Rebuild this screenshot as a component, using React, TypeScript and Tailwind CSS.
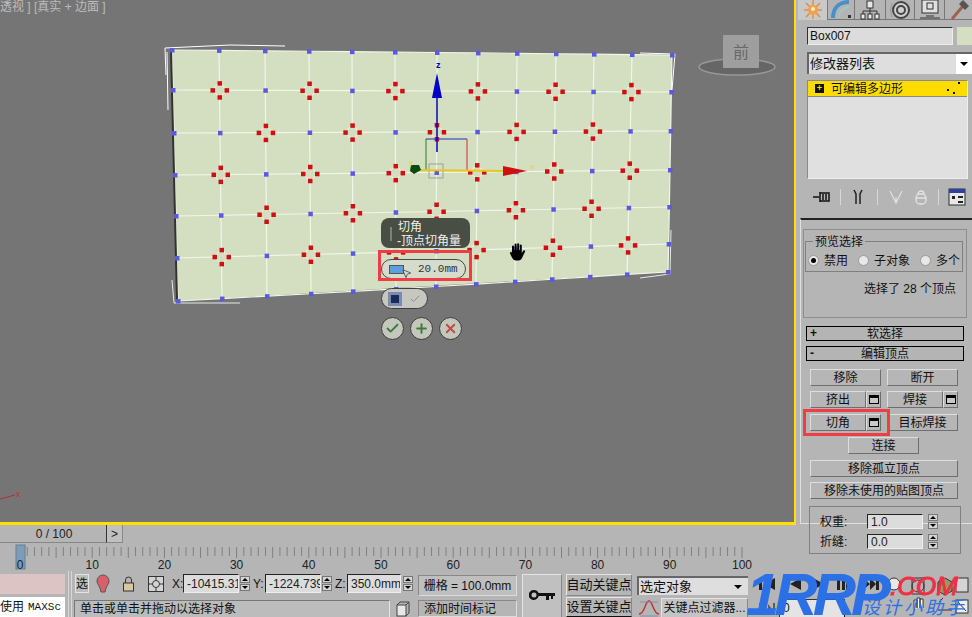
import React from "react";
import { Check, Plus, X, MousePointer2 } from "lucide-react";

const FONT = '"Liberation Sans","Noto Sans CJK SC",sans-serif';

const topX = [172, 219, 265, 309, 352, 395, 437, 478, 517, 556, 594, 632, 672];
const botX = [178, 222, 267, 311, 353, 396, 436, 476, 515, 552, 590, 627, 668];
const leftY = [50, 90, 133, 175, 216, 258, 301];
const rightY = [55, 92, 131, 170, 207, 244, 272];

function pt(i: number, j: number): [number, number] {
  const t = j / 6;
  const u = i / 12;
  return [topX[i] + (botX[i] - topX[i]) * t, leftY[j] + (rightY[j] - leftY[j]) * u];
}

function Mesh() {
  const idx = Array.from({ length: 13 }, (_, i) => i);
  const rows = Array.from({ length: 7 }, (_, j) => j);
  const outline = [pt(0, 0), pt(12, 0), pt(12, 6), pt(0, 6)].map((p) => p.join(",")).join(" ");
  return (
    <svg width="794" height="522" className="block">
      <polygon points={outline} fill="#d3dfc0" />
      {rows.map((j) => (
        <polyline key={j} fill="none" stroke="#f2f5ea" strokeWidth="1.2" points={idx.map((i) => pt(i, j).join(",")).join(" ")} />
      ))}
      {idx.map((i) => (
        <polyline key={i} fill="none" stroke="#f2f5ea" strokeWidth="1.2" points={rows.map((j) => pt(i, j).join(",")).join(" ")} />
      ))}
      <line x1="171" y1="50" x2="177" y2="300" stroke="#30342c" strokeWidth="2" />
      <polyline points="166,75 165,48 230,45 285,46" fill="none" stroke="#fff" strokeWidth="1" />
      <polyline points="168,110 167,52" fill="none" stroke="#fff" strokeWidth="1" />
      <polyline points="172,280 174,303 240,303" fill="none" stroke="#e8e8e8" strokeWidth="1" />
      <polyline points="640,53 675,54 672,90" fill="none" stroke="#fff" strokeWidth="1" />
      <polyline points="671,230 670,274 640,278" fill="none" stroke="#e8e8e8" strokeWidth="1" />
      {rows.map((j) =>
        idx.map((i) => {
          const [x, y] = pt(i, j);
          const red = j > 0 && j < 6 && i > 0 && i < 12 && (i + j) % 2 === 0;
          if (!red) return <rect key={i + "-" + j} x={x - 2} y={y - 2} width="4.5" height="4.5" fill="#5a5ae0" />;
          return (
            <g key={i + "-" + j}>
              <circle cx={x} cy={y} r="5.5" fill="#d3dfc0" stroke="#f2f5ea" strokeWidth="1" />
              <rect x={x - 2} y={y - 9} width="4.5" height="4.5" fill="#d01010" />
              <rect x={x - 2} y={y + 5} width="4.5" height="4.5" fill="#d01010" />
              <rect x={x - 9} y={y - 2} width="4.5" height="4.5" fill="#d01010" />
              <rect x={x + 5} y={y - 2} width="4.5" height="4.5" fill="#d01010" />
            </g>
          );
        })
      )}
      {/* gizmo */}
      <rect x="429" y="164" width="14" height="14" fill="none" stroke="#a0a0a0" strokeWidth="1" />
      <line x1="426" y1="170" x2="426" y2="139" stroke="#1a8a1a" />
      <line x1="426" y1="139" x2="467" y2="139" stroke="#2030c0" />
      <line x1="467" y1="139" x2="467" y2="171" stroke="#d03030" />
      <line x1="437" y1="152" x2="437" y2="95" stroke="#0000c8" strokeWidth="1.5" />
      <polygon points="437,73 432,98 442,98" fill="#0000c8" />
      <text x="436" y="68" fontSize="9" fontWeight="700" fill="#0000c8" fontFamily={FONT}>z</text>
      <line x1="414" y1="170" x2="505" y2="171" stroke="#e8c820" strokeWidth="2" />
      <polygon points="503,166 503,176 527,171" fill="#d01010" />
      <polygon points="411,165 419,165 421,170 414,174 410,171" fill="#0b4a10" />
      <text x="409" y="165" fontSize="8" fill="#e8d040" fontFamily={FONT}>y</text>
      <text x="530" y="169" fontSize="8" fill="#e8d040" fontFamily={FONT}>x</text>
      {/* view cube */}
      <ellipse cx="737" cy="67" rx="38" ry="8" fill="#666" stroke="#989898" strokeWidth="1.5" />
      <rect x="723" y="35" width="36" height="33" rx="1" fill="#9e9e9e" />
      <text x="741" y="58" textAnchor="middle" fontSize="16" fill="#686868" fontFamily={FONT}>前</text>
      {/* origin axes */}
      <line x1="0" y1="499" x2="15" y2="495" stroke="#b03030" />
      <text x="16" y="497" fontSize="9" fill="#c03030" fontFamily={FONT}>x</text>
    </svg>
  );
}

function PillBtn({ children }: { children: React.ReactNode }) {
  return (
    <div className="w-[23px] h-[23px] rounded-full border border-[#3c3c3c] bg-[#c4c8bc] flex items-center justify-center">
      {children}
    </div>
  );
}

function Caddy() {
  return (
    <>
      <div className="absolute left-[381px] top-[218px] w-[89px] h-[30px] rounded-[8px] bg-[#484e44] text-[#f0f0f0] text-[12px] leading-[14px] pl-[17px] pt-[2px]">
        <span className="absolute left-[9px] top-[9px] w-[2px] h-[14px] bg-[#7c8278]" />
        <div>切角</div>
        <div className="-ml-[1px] whitespace-nowrap">-顶点切角量</div>
      </div>
      <div className="absolute left-[381px] top-[259px] w-[85px] h-[20px] rounded-full border border-[#4a4a4a] bg-[#d6dccc] flex items-center text-[11px] text-[#333] pl-[7px]" style={{ fontFamily: '"Liberation Mono",monospace' }}>
        <span className="w-[15px] h-[9px] bg-[#5aa0e0] border border-[#555]" />
        <MousePointer2 size={11} className="-ml-[3px] mt-[8px] text-[#555]" />
        <span className="ml-[6px]">20.0mm</span>
      </div>
      <div className="absolute left-[378px] top-[250px] w-[94px] h-[31px] border-[3px] border-[#f03c44]" />
      <div className="absolute left-[381px] top-[288px] w-[47px] h-[21px] rounded-full border border-[#404040] bg-[#c6c8c0] flex items-center pl-[6px] gap-[7px]">
        <span className="w-[14px] h-[14px] bg-[#1c2a5a] border-[3px] border-[#7a8ab0]" />
        <Check size={12} className="text-[#909090]" />
      </div>
      <div className="absolute left-[381px] top-[317px] flex gap-[6px]">
        <PillBtn><Check size={15} strokeWidth={3} className="text-[#3d7a3d]" /></PillBtn>
        <PillBtn><Plus size={15} strokeWidth={3} className="text-[#3d7a3d]" /></PillBtn>
        <PillBtn><X size={15} strokeWidth={3} className="text-[#c04a4a]" /></PillBtn>
      </div>
      <svg className="absolute left-[509px] top-[243px]" width="17" height="18" viewBox="0 0 17 18" fill="#000">
        <path d="M3 8V3.5a1 1 0 0 1 2 0V7h.6V1.5a1 1 0 0 1 2 0V7h.6V1.2a1 1 0 0 1 2 0V7h.6V2.5a1 1 0 0 1 2 0V10l1.6-2.4a1 1 0 0 1 1.7 1L13 15c-.6 1.5-1.7 2.5-3.5 2.5H7C5 17.500 4 16.500 3 14.500L1 10.500a1 1 0 0 1 1.600-1.100z" />
      </svg>
    </>
  );
}

function Btn({ w, label, ml = 0 }: { w: number; label: string; ml?: number }) {
  return (
    <div
      className="h-[17px] shrink-0 bg-[#b6b6b6] border border-t-[#dedede] border-l-[#dedede] border-r-[#6e6e6e] border-b-[#6e6e6e] flex items-center justify-center text-[12px] text-[#111] whitespace-nowrap"
      style={{ width: w, marginLeft: ml }}
    >
      {label}
    </div>
  );
}

function BoxBtn() {
  return (
    <div className="w-[15px] h-[17px] shrink-0 bg-[#b6b6b6] border border-t-[#dedede] border-l-[#dedede] border-r-[#6e6e6e] border-b-[#6e6e6e] flex items-center justify-center">
      <span className="w-[10px] h-[9px] border border-black border-t-[3px] bg-[#c8c8c8]" />
    </div>
  );
}

function Tab({ w, active, children }: { w: number; active?: boolean; children: React.ReactNode }) {
  return (
    <div
      className={
        "h-[20px] shrink-0 flex items-center justify-center border-r border-[#777] " +
        (active ? "bg-[#c9c9c9]" : "bg-[#b4b4b4] border-b border-b-[#777]")
      }
      style={{ width: w }}
    >
      {children}
    </div>
  );
}

function TabIcons() {
  return (
    <div className="flex h-[20px] pl-[2px]">
      <Tab w={30} active>
        <svg width="22" height="20" viewBox="0 0 22 20">
          <g stroke="#d89040" strokeWidth="1.4">
            <line x1="11" y1="0" x2="11" y2="19" /><line x1="2" y1="10" x2="20" y2="10" />
            <line x1="4" y1="3" x2="18" y2="17" /><line x1="18" y1="3" x2="4" y2="17" />
          </g>
          <circle cx="11" cy="10" r="5" fill="#f0a050" />
          <circle cx="11" cy="9" r="2" fill="#fff0b0" />
        </svg>
      </Tab>
      <Tab w={27}>
        <svg width="24" height="20" viewBox="0 0 24 20">
          <path d="M4 18 C4 8 10 2 20 2" fill="none" stroke="#4a90c8" strokeWidth="4" />
          <path d="M10 18 C10 12 14 8 20 7" fill="none" stroke="#9cc" strokeWidth="1.5" />
          <rect x="19" y="15" width="3" height="3" fill="#333" />
        </svg>
      </Tab>
      <Tab w={31}>
        <svg width="22" height="20" viewBox="0 0 22 20" fill="#e8e8e8" stroke="#333">
          <rect x="8" y="1" width="6" height="7" />
          <path d="M11 8v3M4 14v-3h14v3M11 11v3" fill="none" />
          <rect x="2" y="14" width="4" height="5" /><rect x="9" y="14" width="4" height="5" /><rect x="16" y="14" width="4" height="5" />
        </svg>
      </Tab>
      <Tab w={29}>
        <svg width="24" height="20" viewBox="0 0 24 20" fill="none" stroke="#444">
          <circle cx="13" cy="10" r="8" strokeWidth="2" fill="#d0d0d0" />
          <circle cx="13" cy="10" r="4" strokeWidth="2" />
          <path d="M4 3 Q1 10 4 17" stroke="#999" />
        </svg>
      </Tab>
      <Tab w={30}>
        <svg width="24" height="20" viewBox="0 0 24 20" fill="none" stroke="#333">
          <rect x="4" y="0" width="16" height="13" fill="#e0e0e0" />
          <rect x="9" y="3" width="6" height="6" />
          <path d="M8 16h8M2 18h20" />
        </svg>
      </Tab>
      <Tab w={28}>
        <svg width="22" height="20" viewBox="0 0 22 20">
          <line x1="4" y1="19" x2="15" y2="6" stroke="#a06050" strokeWidth="3" />
          <polygon points="11,4 15,0 21,6 17,10" fill="#555" />
        </svg>
      </Tab>
    </div>
  );
}

function ToolRow() {
  return (
    <div className="ml-[16px] mt-[8px] h-[20px] flex items-center">
      <svg width="20" height="16" viewBox="0 0 20 16" fill="none" stroke="#111" strokeWidth="1.5">
        <path d="M1 8h6M8 3v10M8 4h9v8H8" /><path d="M11 5v6M14 5v6" />
      </svg>
      <span className="w-px h-[16px] bg-[#d8d8d8] ml-[8px]" />
      <svg className="ml-[10px]" width="14" height="16" viewBox="0 0 14 16" fill="none" stroke="#222" strokeWidth="1.5">
        <path d="M3 1l2 4v10M11 1l-2 4v10" />
      </svg>
      <span className="w-px h-[16px] bg-[#d8d8d8] ml-[12px]" />
      <svg className="ml-[10px]" width="16" height="16" viewBox="0 0 16 16" fill="none" stroke="#dedede" strokeWidth="1.3">
        <path d="M2 2l6 12 6-12M8 14V8" />
      </svg>
      <svg className="ml-[10px]" width="14" height="16" viewBox="0 0 14 16" fill="none" stroke="#e4e4e4" strokeWidth="1.3">
        <rect x="2" y="5" width="10" height="10" rx="4" /><path d="M4 5a3 3 0 0 1 6 0M2 9h10" />
      </svg>
      <span className="w-px h-[16px] bg-[#d8d8d8] ml-[10px]" />
      <svg className="ml-[9px]" width="18" height="18" viewBox="0 0 18 18">
        <rect x="1" y="1" width="16" height="16" fill="#e8e8e8" stroke="#233" />
        <rect x="1" y="1" width="16" height="4" fill="#3040a0" />
        <rect x="4" y="8" width="3" height="3" fill="#222" /><rect x="10" y="8" width="5" height="2" fill="#222" /><rect x="10" y="13" width="5" height="2" fill="#222" />
      </svg>
    </div>
  );
}

function Radio({ on, label, ml }: { on?: boolean; label: string; ml: number }) {
  return (
    <div className="flex items-center gap-[5px] shrink-0 whitespace-nowrap" style={{ marginLeft: ml }}>
      <span className="w-[11px] h-[11px] shrink-0 rounded-full bg-[#e8e8e8] border border-[#999] flex items-center justify-center">
        {on && <span className="w-[5px] h-[5px] rounded-full bg-black" />}
      </span>
      <span className="text-[12px] leading-none text-[#111]">{label}</span>
    </div>
  );
}

function Rollout({ sign, label, mt }: { sign: string; label: string; mt: number }) {
  return (
    <div className="relative ml-[3px] w-[158px] h-[15px] border border-black bg-[#b4b4b4] flex items-center justify-center text-[12px] text-[#111]" style={{ marginTop: mt }}>
      <span className="absolute left-[3px] top-[-1px] text-[12px] font-bold leading-[14px]">{sign}</span>
      {label}
    </div>
  );
}

function SpinArrows() {
  return (
    <div className="w-[10px] h-[15px] shrink-0 flex flex-col gap-px">
      <div className="flex-1 bg-[#d4d4d4] border border-[#777] flex items-center justify-center text-[0px]">
        <span className="border-x-[3px] border-x-transparent border-b-[3px] border-b-black" />
      </div>
      <div className="flex-1 bg-[#d4d4d4] border border-[#777] flex items-center justify-center text-[0px]">
        <span className="border-x-[3px] border-x-transparent border-t-[3px] border-t-black" />
      </div>
    </div>
  );
}

function Sunken({ w, text, h = 15 }: { w: number; text: string; h?: number }) {
  return (
    <div
      className="shrink-0 bg-[#dcdcdc] border border-t-[#222] border-l-[#222] border-r-[#efefef] border-b-[#efefef] text-[12px] pl-[3px] flex items-center overflow-hidden whitespace-nowrap text-[#222]"
      style={{ width: w, height: h }}
    >
      {text}
    </div>
  );
}

function RightPanel() {
  return (
    <div className="w-[176px] h-[525px] shrink-0 bg-[#b5b5b5] text-[#111]">
      <TabIcons />
      <div className="ml-[11px] mt-[7px] flex h-[18px]">
        <div className="w-[146px] bg-[#dcdcdc] border border-t-[#333] border-l-[#333] border-r-[#eee] border-b-[#eee] text-[12px] pl-[2px] flex items-center">Box007</div>
        <div className="ml-[4px] w-[15px] bg-[#d3dfc0]" />
      </div>
      <div className="ml-[11px] mt-[7px] h-[22px] w-[165px] flex bg-[#dedede] border-t-2 border-l-2 border-t-[#666] border-l-[#666]">
        <div className="flex-1 text-[13px] pl-[1px] flex items-center">修改器列表</div>
        <div className="w-[16px] bg-white flex items-center justify-center">
          <span className="border-x-[4px] border-x-transparent border-t-[4px] border-t-black" />
        </div>
      </div>
      <div className="ml-[11px] mt-[6px] h-[99px] w-[161px] bg-[#e0e0e0] border border-[#8a8a8a] border-r-[#eee] border-b-[#eee]">
        <div className="h-[16px] bg-[#ffdc00] border-b border-[#888] flex items-center relative text-[12px]">
          <span className="ml-[7px] w-[9px] h-[9px] bg-[#111] text-[#ffdc00] flex items-center justify-center text-[9px] font-bold leading-none">+</span>
          <span className="ml-[7px]">可编辑多边形</span>
          <svg className="absolute left-[138px] top-0" width="16" height="15" fill="#000">
            <rect x="12" y="1" width="2" height="2" /><rect x="1" y="8" width="2" height="2" /><rect x="7" y="11" width="2" height="2" />
          </svg>
        </div>
      </div>
      <ToolRow />
      <div className="mt-[11px] ml-[4px] h-[306px] border-t-2 border-t-[#222] border-l border-l-[#e0e0e0] border-b border-b-[#e0e0e0] pl-[2px]">
        <div className="mt-[9px] w-[164px] h-[89px] border border-[#8e8e8e] relative">
          <div className="absolute left-[1px] top-[11px] w-[158px] h-[31px] border border-[#808080]">
            <span className="absolute left-[7px] -top-[7px] bg-[#b5b5b5] px-[2px] text-[12px] leading-[14px] whitespace-nowrap">预览选择</span>
            <div className="mt-[11px] flex items-center h-[15px]">
              <Radio on label="禁用" ml={2} />
              <Radio label="子对象" ml={10} />
              <Radio label="多个" ml={10} />
            </div>
          </div>
          <div className="absolute right-[10px] top-[51px] text-[12px] leading-[16px] whitespace-nowrap">选择了 28 个顶点</div>
        </div>
        <Rollout sign="+" label="软选择" mt={8} />
        <Rollout sign="-" label="编辑顶点" mt={5} />
        <div className="ml-[7px] mt-[8px] flex">
          <Btn w={71} label="移除" /><Btn w={71} label="断开" ml={6} />
        </div>
        <div className="ml-[7px] mt-[5px] flex">
          <Btn w={56} label="挤出" /><BoxBtn /><Btn w={56} label="焊接" ml={6} /><BoxBtn />
        </div>
        <div className="ml-[7px] mt-[6px] flex">
          <Btn w={56} label="切角" /><BoxBtn /><Btn w={71} label="目标焊接" ml={6} />
        </div>
        <div className="ml-[45px] mt-[6px]"><Btn w={71} label="连接" /></div>
        <div className="ml-[7px] mt-[6px]"><Btn w={148} label="移除孤立顶点" /></div>
        <div className="ml-[7px] mt-[5px]"><Btn w={148} label="移除未使用的贴图顶点" /></div>
        <div className="ml-[6px] mt-[7px] w-[152px] h-[48px] border border-[#808080] pl-[10px] pt-[7px] text-[12px]">
          <div className="flex items-center h-[15px]">
            <span className="w-[47px]">权重:</span><Sunken w={56} text="1.0" /><span className="w-[5px]" /><SpinArrows />
          </div>
          <div className="flex items-center h-[15px] mt-[5px]">
            <span className="w-[47px]">折缝:</span><Sunken w={56} text="0.0" /><span className="w-[5px]" /><SpinArrows />
          </div>
        </div>
      </div>
    </div>
  );
}

function Timeline() {
  const ticks = Array.from({ length: 101 }, (_, i) => i);
  const labels = [10, 20, 30, 40, 50, 60, 70, 80, 90, 100];
  return (
    <svg width="972" height="28" className="block">
      {ticks.map((i) => {
        const x = 20 + i * 7.22;
        return <line key={i} x1={x} x2={x} y1={4} y2={i % 5 === 0 ? 15 : 13} stroke="#808080" />;
      })}
      <rect x="16" y="2" width="9" height="24" fill="#7d9cb8" stroke="#6a7f90" />
      <text x="20" y="26" textAnchor="middle" fontSize="12" fill="#222" fontFamily={FONT}>0</text>
      {labels.map((n) => (
        <text key={n} x={20 + n * 7.22} y="26" textAnchor="middle" fontSize="12" fill="#222" fontFamily={FONT}>{n}</text>
      ))}
    </svg>
  );
}

function Glyph({ d, cls }: { d: string; cls: string }) {
  return (
    <svg className={cls} width="16" height="12" viewBox="0 0 16 12" fill="#222"><path d={d} /></svg>
  );
}

function StatusBar() {
  return (
    <div className="flex h-[46px] text-[#111] text-[12px]">
      <div className="w-[65px] shrink-0 pt-[3px]">
        <div className="h-[20px] bg-[#dcc4c4]" />
        <div className="h-[20px] mt-[3px] bg-white flex items-center whitespace-nowrap overflow-hidden">
          使用 <span className="ml-[4px] text-[11px]" style={{ fontFamily: '"Liberation Mono",monospace' }}>MAXSc</span>
        </div>
      </div>
      <div className="w-[4px] ml-[3px] shrink-0 border-x border-[#d8d8d8]" />
      <div className="w-[344px] shrink-0 ml-[2px]">
        <div className="flex items-center h-[29px] pb-[4px] pl-[1px]">
          <div className="w-[14px] h-[19px] shrink-0 border border-[#e4e4e4] bg-[#bdbdbd] overflow-hidden text-center leading-[18px]">选</div>
          <svg className="ml-[7px] shrink-0" width="14" height="20" viewBox="0 0 14 20">
            <path d="M7 1a6 6 0 0 1 6 6c0 3-3 5-4 11H5C4 12 1 10 1 7a6 6 0 0 1 6-6z" fill="#d8606a" stroke="#555" />
          </svg>
          <svg className="ml-[12px] shrink-0" width="13" height="16" viewBox="0 0 13 16" fill="none" stroke="#333">
            <path d="M3.500 7V4a3 3 0 0 1 6 0v3" /><rect x="1.500" y="7" width="10" height="8" fill="#d8c8a0" />
          </svg>
          <svg className="ml-[13px] shrink-0" width="16" height="16" viewBox="0 0 16 16" fill="none" stroke="#333">
            <rect x="0.500" y="0.500" width="15" height="15" fill="#d4d4d4" /><circle cx="8" cy="8" r="3.500" /><path d="M8 1v3M8 12v3M1 8h3M12 8h3" />
          </svg>
          <span className="ml-[8px] w-[11px] shrink-0">X:</span>
          <Sunken w={56} h={19} text="-10415.314" />
          <span className="ml-[1px]"><SpinArrows /></span>
          <span className="ml-[3px] w-[12px] shrink-0">Y:</span>
          <Sunken w={56} h={19} text="-1224.7396" />
          <span className="ml-[1px]"><SpinArrows /></span>
          <span className="ml-[3px] w-[12px] shrink-0">Z:</span>
          <Sunken w={54} h={19} text="350.0mm" />
          <span className="ml-[2px]"><SpinArrows /></span>
        </div>
        <div className="flex">
          <div className="w-[316px] h-[17px] border-t border-l border-t-[#777] border-l-[#777] border-r border-r-[#e4e4e4] pl-[5px] overflow-hidden whitespace-nowrap bg-[#bcbcbc] leading-[17px]">单击或单击并拖动以选择对象</div>
          <svg className="ml-[6px]" width="14" height="17" viewBox="0 0 14 17" fill="#e8e8e8" stroke="#444">
            <rect x="1" y="5" width="9" height="11" /><path d="M1 5l3-3h9v11l-3 3M10 5l3-3" fill="none" />
          </svg>
        </div>
      </div>
      <div className="w-[99px] shrink-0 relative">
        <div className="h-[21px] mt-[4px] bg-[#bfbfbf] border border-[#dcdcdc] border-t-[#888] border-l-[#888] flex items-center justify-center whitespace-nowrap">栅格 = 100.0mm</div>
        <div className="h-[17px] mt-[4px] border border-[#dcdcdc] border-t-[#888] border-l-[#888] pl-[5px] flex items-center whitespace-nowrap overflow-hidden">添加时间标记</div>
      </div>
      <div className="w-[40px] shrink-0 ml-[5px] mt-[3px] bg-[#c0c0c0] border border-t-[#e4e4e4] border-l-[#e4e4e4] border-r-[#888] border-b-0 flex items-center justify-center">
        <svg width="26" height="14" viewBox="0 0 26 14" fill="#111">
          <path fillRule="evenodd" d="M5 1a5 5 0 0 1 4.600 3H26v3h-2v3h-2V7h-2v4h-3V7H9.600A5 5 0 1 1 5 1zm0 2.500a2.500 2.500 0 1 0 0 5 2.500 2.500 0 0 0 0-5z" />
        </svg>
      </div>
      <div className="w-[66px] ml-[4px] shrink-0 pt-[3px] text-[13px]">
        <div className="h-[22px] border border-t-[#e4e4e4] border-l-[#e4e4e4] border-r-[#888] border-b-[#888] flex items-center justify-center whitespace-nowrap">自动关键点</div>
        <div className="h-[20px] mt-[1px] border border-t-[#e4e4e4] border-l-[#e4e4e4] border-r-[#888] flex items-center justify-center whitespace-nowrap">设置关键点</div>
      </div>
      <div className="w-[111px] ml-[5px] shrink-0 pt-[5px]">
        <div className="h-[19px] bg-[#dedede] border-t-2 border-l-2 border-t-[#666] border-l-[#666] text-[13px] pl-[1px] flex items-center justify-between pr-[6px]">
          选定对象
          <span className="border-x-[4px] border-x-transparent border-t-[4px] border-t-black" />
        </div>
        <div className="flex mt-[3px] h-[20px]">
          <svg className="shrink-0" width="24" height="20" viewBox="0 0 24 20" fill="none">
            <path d="M2 16C8 16 8 3 12 3s4 13 10 13" stroke="#c03030" strokeWidth="1.400" />
            <path d="M3 4h18M3 18h18" stroke="#8090b0" />
          </svg>
          <div className="flex-1 bg-[#c4c4c4] border border-t-[#e4e4e4] border-l-[#e4e4e4] border-r-[#888] flex items-center justify-center whitespace-nowrap text-[12px]">关键点过滤器...</div>
        </div>
      </div>
      <div className="flex-1 relative">
        <div className="flex items-center gap-[10px] ml-[11px] mt-[7px]">
          <Glyph cls="" d="M0 0h3v12H0zM16 0v12L5 6z" />
          <Glyph cls="" d="M0 0h3v12H0zM16 0v12L5 6z" />
          <Glyph cls="" d="M2 0v12l11-6z" />
          <Glyph cls="" d="M0 0h3v12H0zM5 0h3v12H5zM9 0v12l7-6z" />
          <Glyph cls="" d="M0 0v12l7-6zM7 0v12l6-6zM13 0h3v12h-3z" />
        </div>
        <div className="flex items-center ml-[11px] mt-[9px]">
          <Glyph cls="opacity-60" d="M0 0h2v12H0zM14 0h2v12h-2zM3 6l4-5v10zM13 6L9 1v10z" />
          <div className="ml-[4px] w-[66px] h-[19px] bg-[#e4e4e4] border border-t-[#333] border-l-[#333] pl-[3px] leading-[17px]">0</div>
        </div>
        <svg className="absolute left-[138px] top-[3px]" width="84" height="43" viewBox="0 0 84 43" fill="none" stroke="#333">
          <circle cx="8" cy="10" r="6" fill="#e8e8e8" />
          <circle cx="32" cy="12" r="6" /><rect x="26" y="4" width="12" height="16" />
          <path d="M52 8l7-4 7 4v9l-7 4-7-4z" fill="#8aa060" />
          <rect x="70" y="4" width="12" height="14" fill="#d4d4d4" />
          <path d="M28 36V26h3v8M31 34V24h3v10M34 34V25h3v9" fill="#fff" />
          <path d="M53 28l4-4M52 36h14" /><rect x="70" y="26" width="12" height="13" fill="#eee" />
          <path d="M72 28l8 9" />
        </svg>
      </div>
    </div>
  );
}

function Logo() {
  return (
    <div className="absolute left-[746px] top-[560px] w-[226px] h-[57px] overflow-hidden pointer-events-none">
      <div className="absolute left-0 top-[-1px] text-[60px] leading-[72px] font-bold italic text-[#2c70e6] tracking-[-5px]">1RRP</div>
      <div className="absolute left-[144px] top-[10px] text-[26px] leading-[32px] italic text-[#ee3046] [-webkit-text-stroke:1px_#ee3046]">.COM</div>
      <div className="absolute left-[116px] top-[38px] text-[18px] leading-[20px] italic text-[#2c70e6] tracking-[3px] whitespace-nowrap">设计小助手</div>
    </div>
  );
}

export default function App() {
  return (
    <div className="relative w-[972px] h-[617px] overflow-hidden bg-[#b5b5b5]" style={{ fontFamily: FONT }}>
      <div className="flex h-[525px]">
        <div className="relative w-[796px] h-[525px] shrink-0 bg-[#757575] border-r-2 border-b-[3px] border-[#ffe000] overflow-hidden">
          <div className="absolute left-0 top-0 text-[12px] leading-[14px] text-[#bcbcbc] whitespace-pre z-10">透视 ] [真实 + 边面 ]</div>
          <Mesh />
          <Caddy />
        </div>
        <RightPanel />
      </div>
      <div className="flex h-[18px] text-[12px] text-[#222]">
        <div className="w-[107px] bg-[#b5b5b5] border-r border-b border-r-[#333] border-b-[#888] flex items-center justify-center pl-[2px]">0 / 100</div>
        <div className="w-[16px] bg-[#c0c0c0] border-r border-b border-[#888] flex items-center justify-center">&gt;</div>
      </div>
      <Timeline />
      <StatusBar />
      <div className="absolute left-[803px] top-[409px] w-[87px] h-[27px] border-[3px] border-[#f03c44]" />
      <Logo />
    </div>
  );
}
